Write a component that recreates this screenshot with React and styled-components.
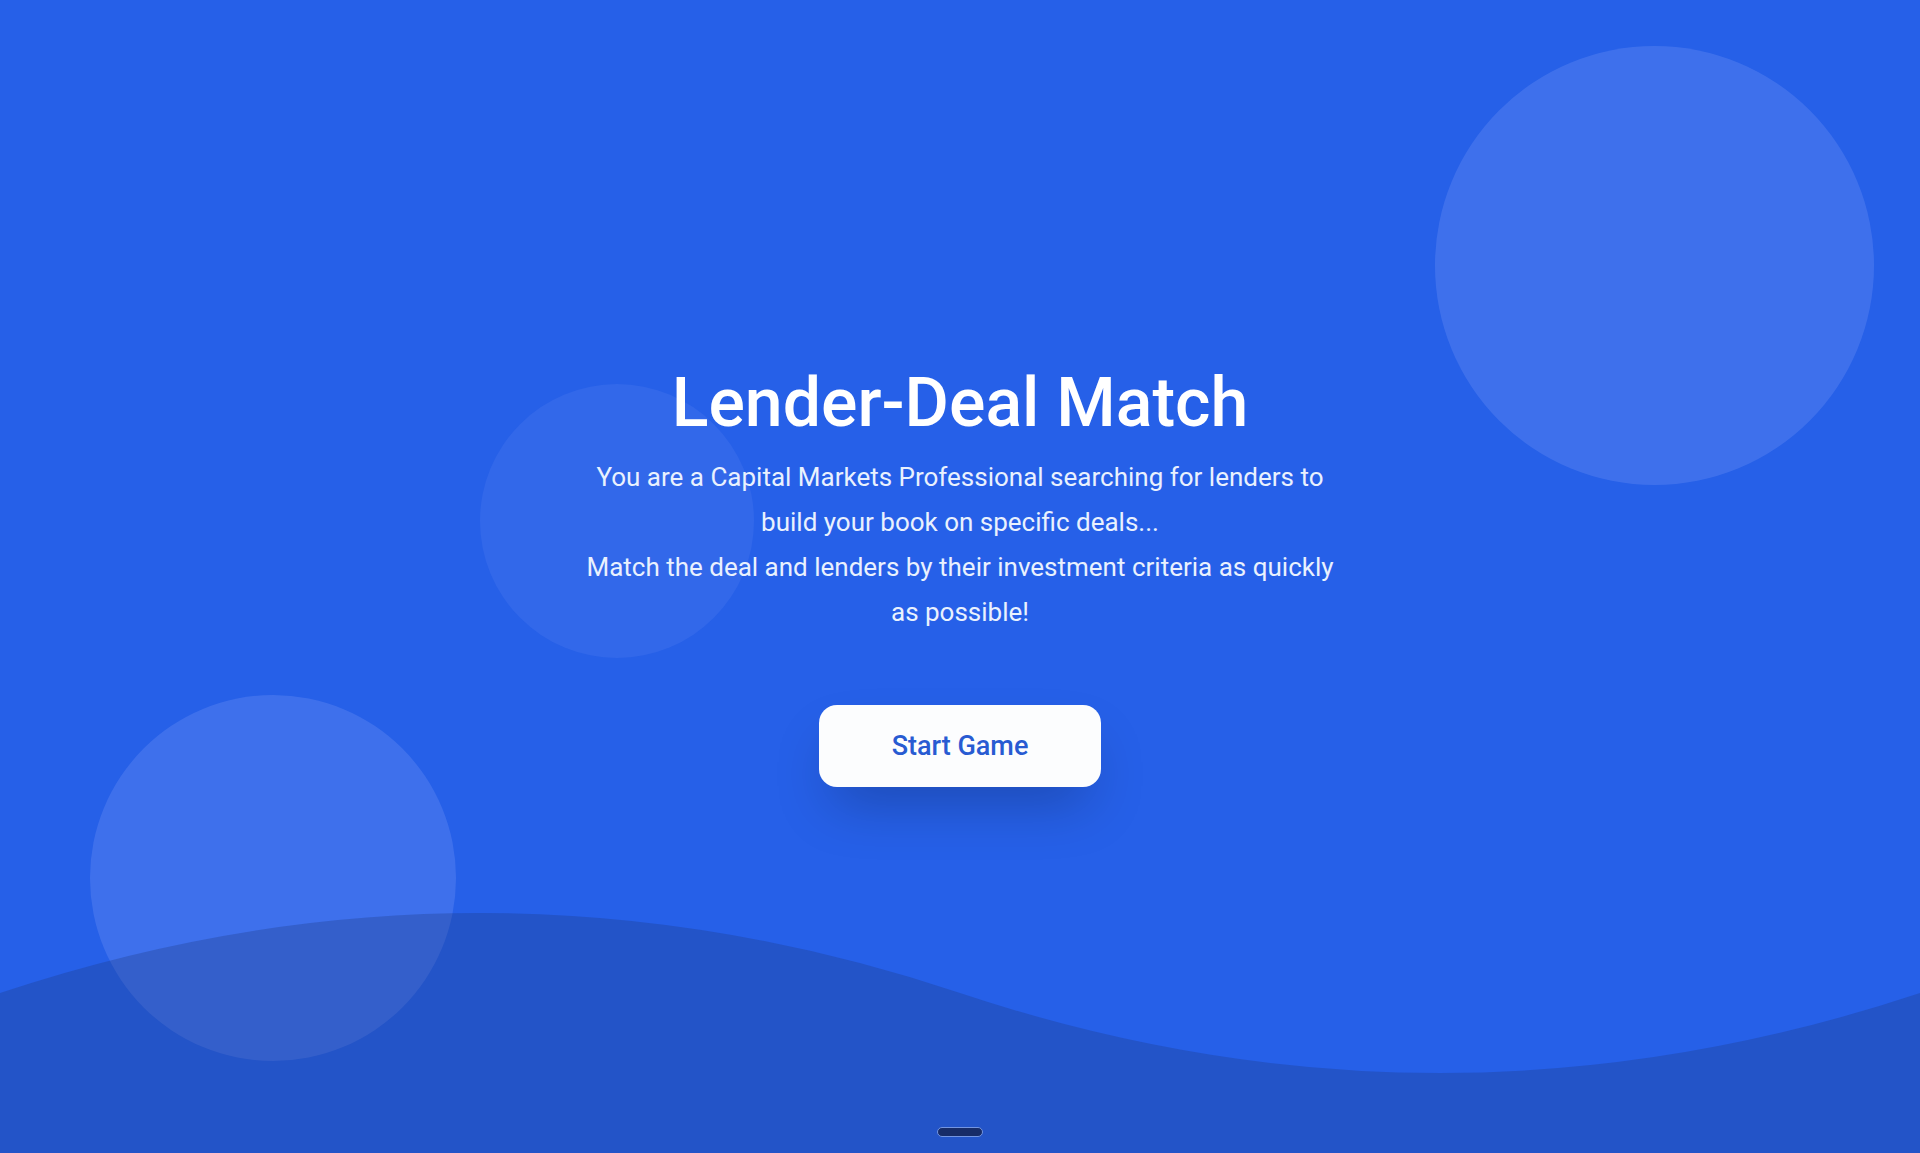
import React from 'react'
import styled, { createGlobalStyle } from 'styled-components'

function App() {
  return (
    <>
      <GlobalStyle />
      <Screen>
        <TopCircle />
        <BottomCircle />
        <MiddleCircle />
        <Wave viewBox="0 0 1920 240" preserveAspectRatio="none" aria-hidden="true">
          <path d="M0 80 Q480 -80 960 80 T1920 80 V240 H0 Z" />
        </Wave>
        <Intro>
          <Title>Lender-Deal Match</Title>
          <Description>
            You are a Capital Markets Professional searching for lenders to build your book on specific deals...
            <br />
            Match the deal and lenders by their investment criteria as quickly as possible!
          </Description>
          <StartButton type="button">Start Game</StartButton>
        </Intro>
        <Footer>
          <Handle />
        </Footer>
      </Screen>
    </>
  )
}

const GlobalStyle = createGlobalStyle`
  * {
    box-sizing: border-box;
  }

  body {
    margin: 0;
    font-family: Roboto, "Liberation Sans", sans-serif;
    -webkit-font-smoothing: antialiased;
  }
`

const Screen = styled.main`
  position: relative;
  display: grid;
  grid-template-rows: 1fr auto 1fr;
  justify-items: center;
  min-height: 100vh;
  overflow: hidden;
  background: #2660e8;
`

const Circle = styled.div`
  position: absolute;
  aspect-ratio: 1;
  border-radius: 50%;
  background: rgb(160, 180, 255);
`

const TopCircle = styled(Circle)`
  top: 4%;
  right: 2.4%;
  width: 439px;
  opacity: 0.2;
`

const BottomCircle = styled(Circle)`
  bottom: 8%;
  left: 4.7%;
  width: 366px;
  opacity: 0.2;
`

const MiddleCircle = styled(Circle)`
  top: 33.3%;
  left: 25%;
  width: 274px;
  opacity: 0.1;
`

const Wave = styled.svg`
  position: absolute;
  bottom: 0;
  left: 0;
  width: 100%;
  height: 240px;
  fill: #1e387f;
  fill-opacity: 0.3;
`

const Intro = styled.section`
  position: relative;
  display: flex;
  flex-direction: column;
  grid-row: 2;
  align-items: center;
  max-width: 768px;
  text-align: center;
`

const Title = styled.h1`
  margin: 0 0 16px;
  color: #ffffff;
  font-size: 68px;
  font-weight: 500;
  line-height: 72px;
`

const Description = styled.p`
  margin: 0 0 70px;
  color: #e9f1fe;
  font-size: 26px;
  line-height: 45px;
`

const StartButton = styled.button`
  padding: 24px 73px;
  border: 0;
  border-radius: 18px;
  background: #fcfdfe;
  box-shadow: 0 28px 56px -14px rgba(0, 0, 0, 0.25);
  color: #285bd2;
  font-family: inherit;
  font-size: 27px;
  font-weight: 500;
  line-height: 34px;
  cursor: pointer;
`

const Footer = styled.footer`
  position: relative;
  display: flex;
  grid-row: 3;
  align-self: end;
  padding-bottom: 16px;
`

const Handle = styled.div`
  width: 46px;
  height: 10px;
  border: 1px solid #7395e2;
  border-radius: 5px;
  background: #172c68;
`

export default App
